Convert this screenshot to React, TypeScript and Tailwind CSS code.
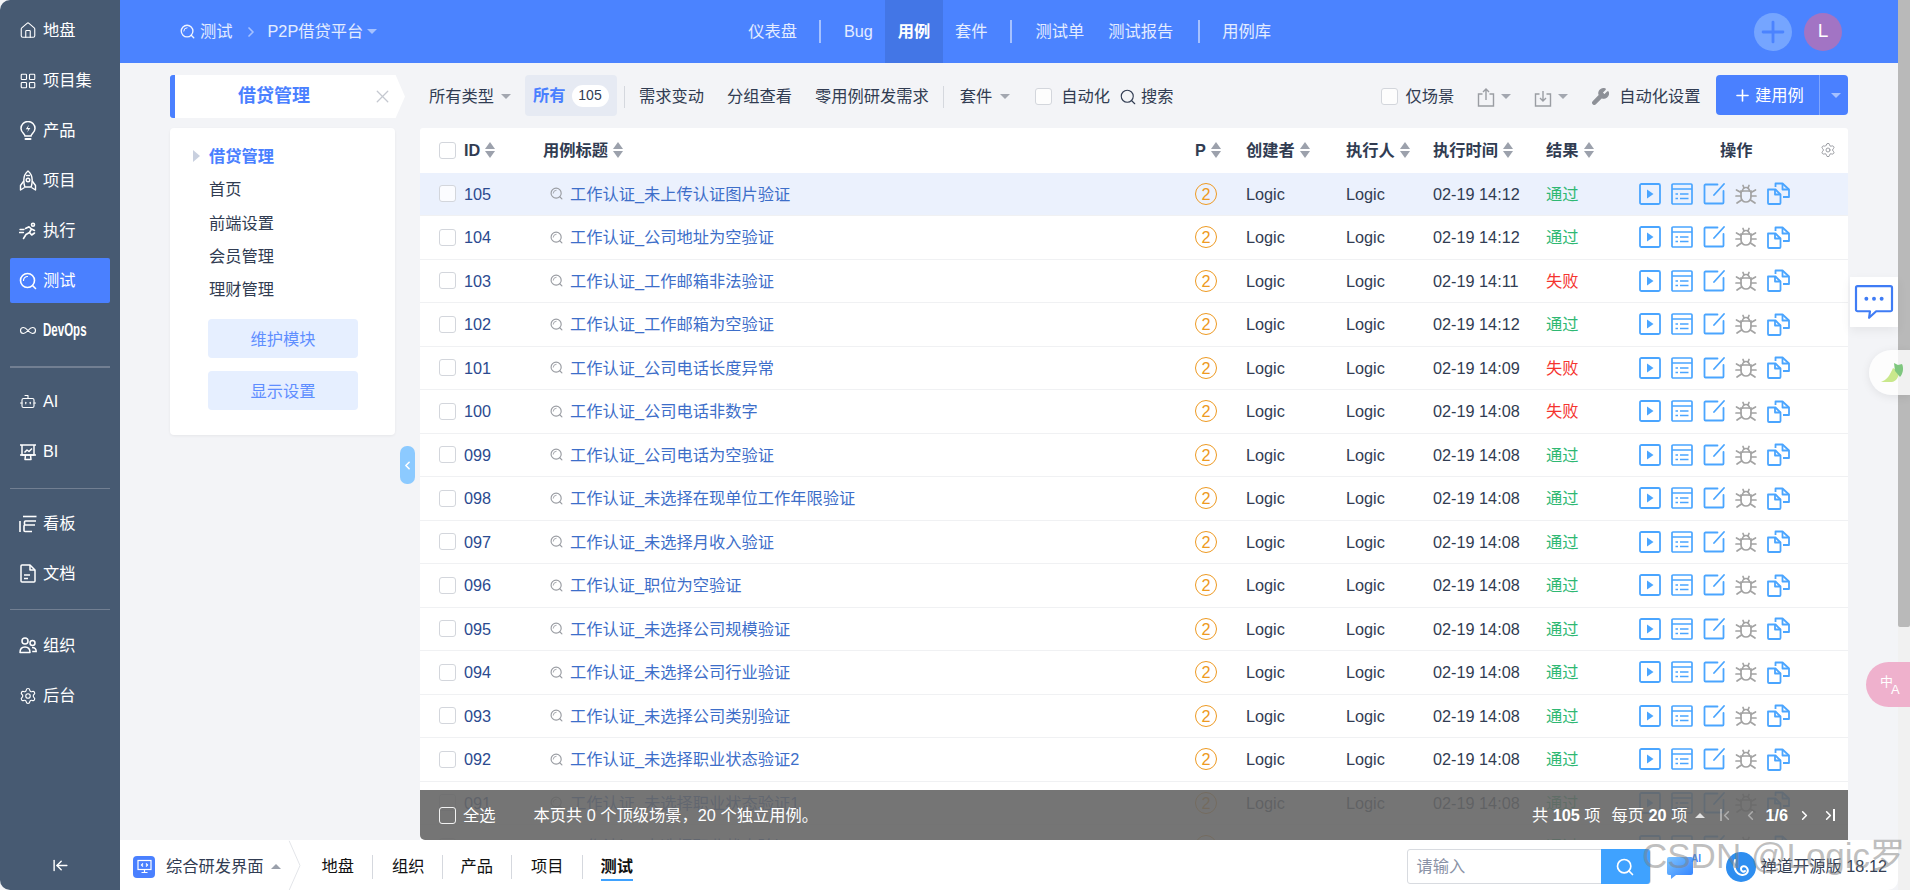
import { ArrowLeftToLine, Bot, ChevronLeft, ChevronRight, House, Infinity as InfinityIcon, LayoutGrid, Plus, Search, Settings, Wrench, X } from "lucide-react";

type Case = { id: string; title: string; time: string; result: string };

const cases: Case[] = [
  { id: "105", title: "工作认证_未上传认证图片验证", time: "02-19 14:12", result: "通过" },
  { id: "104", title: "工作认证_公司地址为空验证", time: "02-19 14:12", result: "通过" },
  { id: "103", title: "工作认证_工作邮箱非法验证", time: "02-19 14:11", result: "失败" },
  { id: "102", title: "工作认证_工作邮箱为空验证", time: "02-19 14:12", result: "通过" },
  { id: "101", title: "工作认证_公司电话长度异常", time: "02-19 14:09", result: "失败" },
  { id: "100", title: "工作认证_公司电话非数字", time: "02-19 14:08", result: "失败" },
  { id: "099", title: "工作认证_公司电话为空验证", time: "02-19 14:08", result: "通过" },
  { id: "098", title: "工作认证_未选择在现单位工作年限验证", time: "02-19 14:08", result: "通过" },
  { id: "097", title: "工作认证_未选择月收入验证", time: "02-19 14:08", result: "通过" },
  { id: "096", title: "工作认证_职位为空验证", time: "02-19 14:08", result: "通过" },
  { id: "095", title: "工作认证_未选择公司规模验证", time: "02-19 14:08", result: "通过" },
  { id: "094", title: "工作认证_未选择公司行业验证", time: "02-19 14:08", result: "通过" },
  { id: "093", title: "工作认证_未选择公司类别验证", time: "02-19 14:08", result: "通过" },
  { id: "092", title: "工作认证_未选择职业状态验证2", time: "02-19 14:08", result: "通过" },
  { id: "091", title: "工作认证_未选择职业状态验证1", time: "02-19 14:08", result: "通过" },
  { id: "090", title: "工作认证_未选择职业状态验证", time: "02-19 14:08", result: "通过" },
];

function QIcon({ size = 18, className = "" }: { size?: number; className?: string }) {
  return (
    <svg width={size} height={size} viewBox="0 0 18 18" fill="none" stroke="currentColor" strokeWidth="1.6" strokeLinecap="round" className={className}>
      <circle cx="8.5" cy="8.5" r="7" />
      <path d="M13.5 13.5 16.5 16.5" />
      <path d="M8.5 4.5a4 4 0 0 0-4 4" strokeWidth="1.2" />
    </svg>
  );
}

function BulbIcon() {
  return (
    <svg width="18" height="20" viewBox="0 0 18 20" fill="none" stroke="currentColor" strokeWidth="1.5" strokeLinecap="round">
      <path d="M6 15c0-2-4-3.5-4-7.5a7 7 0 0 1 14 0c0 4-4 5.500-4 7.500z" />
      <path d="M6.500 18h5" strokeWidth="2" />
      <path d="M10 3.800 6.800 8.200h2.600L8 11.500l3.400-4.500H8.800z" fill="currentColor" stroke="none" />
    </svg>
  );
}

function RocketIcon() {
  return (
    <svg width="18" height="22" viewBox="0 0 18 22" fill="none" stroke="currentColor" strokeWidth="1.4" strokeLinejoin="round">
      <path d="M9 1c3 2.500 4.200 6 4.200 9 0 2.500-.4 5-1 7H5.800c-.6-2-1-4.500-1-7C4.800 7 6 3.500 9 1z" />
      <circle cx="9" cy="10" r="1.800" />
      <path d="M4.800 11 1.500 15.500V20l4-2.500M13.200 11l3.300 4.500V20l-4-2.500" />
      <path d="M7 5.500h4" />
    </svg>
  );
}

function RunnerIcon() {
  return (
    <svg width="18" height="18" viewBox="0 0 18 18" fill="none" stroke="currentColor" strokeWidth="1.6" strokeLinecap="round" strokeLinejoin="round">
      <circle cx="14" cy="2.800" r="1.500" />
      <path d="M6.500 6.500 10 4.800l2.500 2.200-2 3.500 2.200 2.500 2.800-2M12.500 7l3 1.500M10.500 10.500 7 12.500l-2.500 4" />
      <path d="M1 7.500h4M0.500 10.500h4" strokeWidth="1.300" />
    </svg>
  );
}

function BoardIcon() {
  return (
    <svg width="18" height="18" viewBox="0 0 18 18" fill="none" stroke="currentColor" strokeWidth="1.5" strokeLinejoin="round">
      <path d="M1 2h16M3 2v10h12V2" />
      <path d="m5.500 9.500 2.500-2.500 2 1.500 3-3" />
      <path d="M1 12h16M6.500 12l-.5 4.500h6L11.500 12" />
    </svg>
  );
}

function KanbanIcon() {
  return (
    <svg width="18" height="18" viewBox="0 0 18 18" fill="none" stroke="currentColor" strokeWidth="1.6">
      <path d="M4 1.500h13.500" />
      <path d="M1 6v11" />
      <path d="M17 6H6.500a1 1 0 0 0-1 1v2a1 1 0 0 0 1 1H16M12 10H6a1 1 0 0 0-1 1v4.500a1 1 0 0 0 1 1h7" />
    </svg>
  );
}

function DocIcon() {
  return (
    <svg width="16" height="19" viewBox="0 0 16 19" fill="none" stroke="currentColor" strokeWidth="1.5" strokeLinejoin="round">
      <path d="M2 1h8l5 5v11a1 1 0 0 1-1 1H2a1 1 0 0 1-1-1V2a1 1 0 0 1 1-1z" />
      <path d="M10 1v5h5" />
      <path d="M4 11h6M4 14.500h4" />
    </svg>
  );
}

function TeamIcon() {
  return (
    <svg width="18" height="17" viewBox="0 0 18 17" fill="none" stroke="currentColor" strokeWidth="1.5">
      <circle cx="6" cy="4" r="3" />
      <circle cx="13.500" cy="6" r="2.500" />
      <path d="M1 15.500c0-3.500 2-5.500 5-5.500s5 2 5 5.500H1z" strokeLinejoin="round" />
      <path d="M13 10.500c2.500 0 4.200 1.500 4.200 4h-4" />
    </svg>
  );
}

function PlayAction() {
  return (
    <svg width="22" height="22" viewBox="0 0 22 22" fill="none">
      <rect x="1" y="1" width="20" height="20" rx="1.500" stroke="#4aa5ff" strokeWidth="1.8" />
      <path d="M8 6.500v9l6.500-4.500z" fill="#4aa5ff" />
    </svg>
  );
}

function ListAction() {
  return (
    <svg width="22" height="22" viewBox="0 0 22 22" fill="none" stroke="#4aa5ff" strokeWidth="1.7">
      <rect x="1" y="1" width="20" height="20" rx="1" />
      <path d="M1 6h20M4.500 11h2.500M9 11h8.500M4.500 15.500h2.500M9 15.500h8.500" />
    </svg>
  );
}

function EditAction() {
  return (
    <svg width="22" height="22" viewBox="0 0 22 22" fill="none" stroke="#4aa5ff" strokeWidth="1.8" strokeLinecap="round">
      <path d="M14.500 1.500H2.500a1 1 0 0 0-1 1v17a1 1 0 0 0 1 1h17a1 1 0 0 0 1-1V8" />
      <path d="M21 1 11 12" />
    </svg>
  );
}

function BugAction() {
  return (
    <svg width="22" height="22" viewBox="0 0 22 22" fill="none" stroke="#a3a3a3" strokeWidth="1.7" strokeLinecap="round">
      <path d="M6 8h10v6a5 5 0 0 1-10 0z" />
      <path d="M7.500 8a3.500 3.500 0 0 1 7 0" />
      <path d="M8 2.500 9 4.800M14 2.500 13 4.800M1.500 7 6 9.500M20.500 7 16 9.500M1 13h5M21 13h-5M2 20l4.500-3M20 20l-4.500-3" />
    </svg>
  );
}

function CopyAction() {
  return (
    <svg width="24" height="23" viewBox="0 0 24 23" fill="none" stroke="#4aa5ff" strokeWidth="1.8" strokeLinejoin="round">
      <path d="M1 7.500h7.500l5 5v8.500a1 1 0 0 1-1 1H2a1 1 0 0 1-1-1z" />
      <path d="M8 7.500v5h5.500" />
      <path d="M8.500 5V1.500h7l6.500 6v7.500h-6" />
      <path d="M15.500 1.500v6h6.500" />
    </svg>
  );
}

function UploadIcon({ down = false }: { down?: boolean }) {
  return (
    <svg width="18" height="20" viewBox="0 0 18 20" fill="none" stroke="#9a9da3" strokeWidth="1.4">
      <path d="M5.500 7H1.500v12h15V7h-4" />
      {down ? <path d="M9 4v10M6 11l3 3 3-3" /> : <path d="M9 13V2M6 5l3-3 3 3" />}
    </svg>
  );
}

function Caret({ light = false, className = "" }: { light?: boolean; className?: string }) {
  return <span className={`inline-block w-0 h-0 border-x-[5px] border-x-transparent border-t-[5px] ${light ? "border-t-white/50" : "border-t-[#a3a7b0]"} ${className}`} />;
}

function SortMark() {
  return (
    <span className="inline-flex flex-col gap-[2px] ml-[5px]">
      <span className="w-0 h-0 border-x-[5.5px] border-x-transparent border-b-[7px] border-b-[#9ca1ac]" />
      <span className="w-0 h-0 border-x-[5.5px] border-x-transparent border-t-[7px] border-t-[#9ca1ac]" />
    </span>
  );
}

function CheckBox({ dark = false }: { dark?: boolean }) {
  return <span className={`inline-block w-[17px] h-[17px] rounded-[3px] border shrink-0 ${dark ? "border-white/90" : "border-[#d3d6dc] bg-white/80"}`} />;
}

function NavSep({ className = "" }: { className?: string }) {
  return <span className={`w-[2px] h-[23px] bg-white/50 ${className}`} />;
}

function SideItem({ icon, label, active = false }: { icon: React.ReactNode; label: React.ReactNode; active?: boolean }) {
  return (
    <div className={`flex items-center h-[45px] mx-[10px] pl-[9px] rounded-[2px] text-white ${active ? "bg-[#4a80ff]" : ""}`}>
      <span className="w-[18px] flex justify-center shrink-0">{icon}</span>
      <span className="ml-[6px]">{label}</span>
    </div>
  );
}

function Sidebar() {
  return (
    <aside className="w-[120px] shrink-0 bg-[#475a72] rounded-l-[10px] flex flex-col pt-[8px] gap-[5px] text-[16.25px]">
      <SideItem icon={<House size={19} strokeWidth={1.5} />} label="地盘" />
      <SideItem icon={<LayoutGrid size={18} strokeWidth={1.5} />} label="项目集" />
      <SideItem icon={<BulbIcon />} label="产品" />
      <SideItem icon={<RocketIcon />} label="项目" />
      <SideItem icon={<RunnerIcon />} label="执行" />
      <SideItem active icon={<QIcon />} label="测试" />
      <SideItem
        icon={<InfinityIcon size={19} strokeWidth={1.5} />}
        label={<span className="inline-block text-[18px] font-bold origin-left scale-x-[.64]">DevOps</span>}
      />
      <div className="mx-[10px] h-[2px] bg-[#727f92] mt-[8px] mb-[6px]" />
      <SideItem icon={<Bot size={19} strokeWidth={1.5} />} label="AI" />
      <SideItem icon={<BoardIcon />} label="BI" />
      <div className="mx-[10px] h-px bg-[#727f92] mt-[9px] mb-[7px]" />
      <SideItem icon={<KanbanIcon />} label="看板" />
      <SideItem icon={<DocIcon />} label="文档" />
      <div className="mx-[10px] h-px bg-[#727f92] mt-[8px] mb-[8px]" />
      <SideItem icon={<TeamIcon />} label="组织" />
      <SideItem icon={<Settings size={18} strokeWidth={1.5} />} label="后台" />
      <div className="mt-auto mb-[16px] flex justify-center text-white">
        <ArrowLeftToLine size={17} strokeWidth={2} />
      </div>
    </aside>
  );
}

function TopBar() {
  return (
    <header className="h-[63px] shrink-0 bg-[#4b83ff] flex items-center pl-[60px] pr-[56px] text-[16.25px] text-white/85">
      <QIcon size={15} className="text-white/90" />
      <span className="ml-[5px]">测试</span>
      <ChevronRight size={16} strokeWidth={2.5} className="ml-[10px] text-white/50" />
      <span className="ml-[9px]">P2P借贷平台</span>
      <Caret light className="ml-[4px]" />
      <span className="ml-[371px]">仪表盘</span>
      <NavSep className="ml-[22px]" />
      <span className="ml-[23px]">Bug</span>
      <span className="ml-[12px] w-[58px] h-full bg-[#4376e6] flex items-center justify-center font-bold text-white">用例</span>
      <span className="ml-[12px]">套件</span>
      <NavSep className="ml-[23px]" />
      <span className="ml-[23px]">测试单</span>
      <span className="ml-[24px]">测试报告</span>
      <NavSep className="ml-[25px]" />
      <span className="ml-[22px]">用例库</span>
      <span className="ml-auto w-[38px] h-[38px] rounded-full bg-[#75a5ff] flex items-center justify-center text-[#4b83ff]">
        <Plus size={34} strokeWidth={2} />
      </span>
      <span className="ml-[12px] w-[38px] h-[38px] rounded-full bg-[#a274c4] flex items-center justify-center text-white text-[19px]">L</span>
    </header>
  );
}

function ModuleSide() {
  return (
    <div className="w-[300px] shrink-0 pl-[50px]">
      <div className="relative w-[235px] h-[43px] bg-white flex items-center [clip-path:polygon(0_0,96%_0,100%_50%,96%_100%,0_100%)]">
        <span className="w-[5px] h-full bg-[#4a80ff] rounded-l-[3px]" />
        <span className="ml-[63px] text-[18px] font-bold text-[#4a80ff]">借贷管理</span>
        <X size={21} strokeWidth={1.5} className="ml-[62px] text-[#c5c8d0]" />
      </div>
      <div className="mt-[10px] w-[225px] h-[307px] bg-white rounded-[4px] shadow-[0_1px_3px_rgba(0,0,0,.06)] pt-[11.5px] text-[16.25px] text-[#313c52]">
        <div className="h-[33.3px] flex items-center pl-[23px] font-bold text-[#4a80ff]">
          <span className="w-0 h-0 border-y-[6px] border-y-transparent border-l-[7px] border-l-[#c9d0df] mr-[9px]" />
          借贷管理
        </div>
        <div className="h-[33.3px] flex items-center pl-[39px]">首页</div>
        <div className="h-[33.3px] flex items-center pl-[39px]">前端设置</div>
        <div className="h-[33.3px] flex items-center pl-[39px]">会员管理</div>
        <div className="h-[33.3px] flex items-center pl-[39px]">理财管理</div>
        <div className="ml-[38px] mt-[13.5px] w-[150px] h-[39px] rounded-[4px] bg-[#e6efff] text-[#5f8eff] flex items-center justify-center">维护模块</div>
        <div className="ml-[38px] mt-[13px] w-[150px] h-[39px] rounded-[4px] bg-[#e6efff] text-[#5f8eff] flex items-center justify-center">显示设置</div>
      </div>
    </div>
  );
}

function Toolbar() {
  return (
    <div className="h-[43px] mb-[10px] flex items-center text-[16.25px] text-[#313c52]">
      <span className="ml-[9px]">所有类型</span>
      <Caret className="ml-[7px]" />
      <div className="ml-[14px] w-[92px] h-[41px] -mt-[2px] rounded-[4px] bg-[#e6eaf3] flex items-center pl-[8px]">
        <span className="font-bold text-[#4a80ff]">所有</span>
        <span className="ml-[6px] w-[37px] h-[22px] rounded-full bg-white text-[14px] flex items-center justify-center">105</span>
      </div>
      <span className="ml-[7px] w-px h-[22px] bg-[#d5d8de]" />
      <span className="ml-[14px]">需求变动</span>
      <span className="ml-[23px]">分组查看</span>
      <span className="ml-[23px]">零用例研发需求</span>
      <span className="ml-[14px] w-px h-[22px] bg-[#d5d8de]" />
      <span className="ml-[16px]">套件</span>
      <Caret className="ml-[8px]" />
      <span className="ml-[25px] flex"><CheckBox /></span>
      <span className="ml-[9px]">自动化</span>
      <Search size={18} strokeWidth={1.5} className="ml-[9px]" />
      <span className="ml-[4px]">搜索</span>
      <span className="ml-[207px] flex"><CheckBox /></span>
      <span className="ml-[8px]">仅场景</span>
      <span className="ml-[23px] flex"><UploadIcon /></span>
      <Caret className="ml-[6px]" />
      <span className="ml-[23px] flex"><UploadIcon down /></span>
      <Caret className="ml-[6px]" />
      <Wrench size={19} strokeWidth={1.5} fill="currentColor" className="ml-[23px] text-[#8d9097]" />
      <span className="ml-[9px]">自动化设置</span>
      <div className="ml-auto w-[132px] h-[40px] -mt-[3px] rounded-[4px] bg-[#4a80ff] text-white flex items-center">
        <Plus size={19} strokeWidth={2} className="ml-[17px]" />
        <span className="ml-[3px]">建用例</span>
        <span className="ml-[15px] w-px h-full bg-white/30" />
        <Caret light className="ml-[11px]" />
      </div>
    </div>
  );
}

function HeaderRow() {
  return (
    <div className="h-[44.6px] flex items-center bg-white font-bold text-[#313c52]">
      <div className="w-[44px] pl-[19px] flex"><CheckBox /></div>
      <div className="w-[79px] flex items-center">ID<SortMark /></div>
      <div className="w-[652px] flex items-center">用例标题<SortMark /></div>
      <div className="w-[51px] flex items-center">P<SortMark /></div>
      <div className="w-[100px] flex items-center">创建者<SortMark /></div>
      <div className="w-[87px] flex items-center">执行人<SortMark /></div>
      <div className="w-[113px] flex items-center">执行时间<SortMark /></div>
      <div className="w-[93px] flex items-center">结果<SortMark /></div>
      <div className="flex-1 pl-[81px]">操作</div>
      <Settings size={16} strokeWidth={1.3} className="mr-[12px] text-[#8d9097]" />
    </div>
  );
}

function CaseRow({ item, first }: { item: Case; first: boolean }) {
  return (
    <div className={`h-[43.5px] flex items-center border-b border-[#f0f1f3] text-[#313c52] ${first ? "bg-[#ebf1fd]" : "bg-white"}`}>
      <div className="w-[44px] pl-[19px] flex"><CheckBox /></div>
      <div className="w-[79px] text-[#2b4a8f]">{item.id}</div>
      <div className="w-[652px] flex items-center pl-[7px] text-[#3d6ec9]">
        <QIcon size={13} className="text-[#9a9da3] mr-[7px]" />
        {item.title}
      </div>
      <div className="w-[51px]">
        <span className="w-[22px] h-[22px] rounded-full border border-[#ee9a22] text-[#ee9a22] flex items-center justify-center">2</span>
      </div>
      <div className="w-[100px]">Logic</div>
      <div className="w-[87px]">Logic</div>
      <div className="w-[113px]">{item.time}</div>
      <div className={`w-[93px] ${item.result === "通过" ? "text-[#2fb873]" : "text-[#f5342f]"}`}>{item.result}</div>
      <div className="flex items-center gap-[10px]">
        <PlayAction />
        <ListAction />
        <EditAction />
        <BugAction />
        <CopyAction />
      </div>
    </div>
  );
}

function CaseTable() {
  return (
    <div className="w-[1428px] shrink-0 flex flex-col min-h-0">
      <Toolbar />
      <div className="relative flex-1 overflow-hidden text-[16.25px] rounded-t-[3px]">
        <HeaderRow />
        {cases.map((item, i) => (
          <CaseRow key={item.id} item={item} first={i === 0} />
        ))}
        <div className="absolute left-0 right-0 bottom-0 h-[50px] bg-[#666]/90 rounded-bl-[5px] flex items-center text-white">
          <span className="ml-[19px] flex"><CheckBox dark /></span>
          <span className="ml-[7px]">全选</span>
          <span className="ml-[38px]">本页共 0 个顶级场景，20 个独立用例。</span>
          <span className="ml-auto">共 <b>105</b> 项</span>
          <span className="ml-[11px]">每页 <b>20</b> 项</span>
          <span className="ml-[8px] w-0 h-0 border-x-[5px] border-x-transparent border-b-[5px] border-b-white/80" />
          <span className="ml-[15px] flex items-center text-white/40">
            <span className="w-[2px] h-[12px] bg-white/40" />
            <ChevronLeft size={15} strokeWidth={2.5} className="-ml-[3px]" />
          </span>
          <ChevronLeft size={15} strokeWidth={2.5} className="ml-[9px] text-white/40" />
          <b className="ml-[7px]">1/6</b>
          <ChevronRight size={15} strokeWidth={2.5} className="ml-[9px]" />
          <span className="ml-[9px] mr-[13px] flex items-center">
            <ChevronRight size={15} strokeWidth={2.5} className="-mr-[3px]" />
            <span className="w-[2px] h-[12px] bg-white" />
          </span>
        </div>
      </div>
    </div>
  );
}

function BottomBar() {
  return (
    <footer className="relative h-[50px] shrink-0 bg-white rounded-br-[10px] pt-[3px] flex items-center text-[16.25px] text-[#313c52]">
      <span className="ml-[13px] w-[22px] h-[22px] rounded-[4px] bg-[#4a80ff] flex items-center justify-center">
        <svg width="15" height="15" viewBox="0 0 15 15" fill="none" stroke="#fff" strokeWidth="1.2">
          <rect x="1" y="1.500" width="13" height="9" />
          <path d="M7.500 10.500v3M4.500 13.500h6M6 4.500 4.500 6 6 7.500M9 4.500 10.500 6 9 7.500" />
        </svg>
      </span>
      <span className="ml-[11px]">综合研发界面</span>
      <span className="ml-[7px] w-0 h-0 border-x-[5px] border-x-transparent border-b-[5px] border-b-[#9aa0ab]" />
      <svg width="14" height="50" viewBox="0 0 14 50" fill="none" stroke="#e3e5e9" className="ml-[7px] -translate-y-[1.5px]">
        <path d="M1 0 12 25 1 50" />
      </svg>
      <span className="ml-[20px] text-[#111]">地盘</span>
      <span className="ml-[18px] w-px h-[24px] bg-[#d5d8de]" />
      <span className="ml-[19px] text-[#111]">组织</span>
      <span className="ml-[17px] w-px h-[24px] bg-[#d5d8de]" />
      <span className="ml-[18px] text-[#111]">产品</span>
      <span className="ml-[18px] w-px h-[24px] bg-[#d5d8de]" />
      <span className="ml-[19px] text-[#111]">项目</span>
      <span className="ml-[18px] w-px h-[24px] bg-[#d5d8de]" />
      <span className="ml-[18px] relative font-bold text-[#111]">
        测试
        <span className="absolute left-0 right-0 -bottom-[2px] h-[2px] bg-[#3fa2ff]" />
      </span>
      <div className="ml-auto flex items-center h-[35px] w-[244px] border border-[#d8dbe0] rounded-[3px] pl-[9px] text-[#8a92a6]">
        请输入
        <span className="ml-auto w-[49px] h-[35px] bg-[#3fa2ff] rounded-r-[3px] flex items-center justify-center text-white">
          <Search size={20} strokeWidth={2} />
        </span>
      </div>
      <svg width="36" height="28" viewBox="0 0 36 28" className="ml-[15px]">
        <defs>
          <linearGradient id="aiChat" x1="0" y1="0" x2="1" y2="1">
            <stop offset="0" stopColor="#7cc4ff" />
            <stop offset="1" stopColor="#2f80ff" />
          </linearGradient>
        </defs>
        <path d="M3 4h22a2 2 0 0 1 2 2v14a2 2 0 0 1-2 2H10l-5 4v-4H3a2 2 0 0 1-2-2V6a2 2 0 0 1 2-2z" fill="url(#aiChat)" />
        <text x="25" y="9" fontSize="10" fontWeight="700" fill="#3f8bff">AI</text>
      </svg>
      <svg width="30" height="30" viewBox="0 0 30 30" fill="none" className="ml-[24px]">
        <circle cx="15" cy="15" r="15" fill="#2e8ef0" />
        <path d="M9 8c-2 6 0 14 7 15 5 .5 7-4 5-7s-6-2-6 1 3 3 4 2" stroke="#fff" strokeWidth="2" strokeLinecap="round" />
      </svg>
      <span className="ml-[5px] mr-[11px] whitespace-nowrap">禅道开源版 18.12</span>
    </footer>
  );
}

function Floats() {
  return (
    <>
      <div className="absolute left-[1850px] top-[277px] w-[48px] h-[50px] bg-white shadow-[0_4px_10px_rgba(0,0,0,.06)] flex items-center justify-center">
        <svg width="40" height="36" viewBox="0 0 36 33" fill="none">
          <path d="M3 2h30a1.500 1.500 0 0 1 1.500 1.500v20a1.500 1.500 0 0 1-1.500 1.500H20l-6.500 6 .8-6H3a1.500 1.500 0 0 1-1.500-1.500v-20A1.500 1.500 0 0 1 3 2z" stroke="#3f7cf5" strokeWidth="2" strokeLinejoin="round" fill="#fff" />
          <circle cx="11" cy="13.500" r="1.800" fill="#3f7cf5" />
          <circle cx="18" cy="13.500" r="1.800" fill="#3f7cf5" />
          <circle cx="25" cy="13.500" r="1.800" fill="#3f7cf5" />
        </svg>
      </div>
      <div className="absolute left-[1869px] top-[350px] w-[41px] h-[45px] rounded-l-full bg-white/80 shadow-[0_2px_10px_rgba(0,0,0,.08)] flex items-center pl-[11px]">
        <svg width="24" height="24" viewBox="0 0 24 24">
          <path d="M1 21c6-2 9-7 12-14l5 3c2 4-1 10-6 11z" fill="#c9e88c" />
          <path d="M14 2l4 2 4-1c2 4 1 10-2 13l-5-6z" fill="#7fc77f" />
        </svg>
      </div>
      <div className="absolute left-[1866px] top-[662px] w-[44px] h-[45px] rounded-l-full bg-[#eeaac8]/90 flex items-center pl-[14px] text-white text-[13px] leading-none">
        <span className="-mt-[7px]">中</span>
        <span className="-ml-[2px] mt-[9px]">A</span>
      </div>
      <div className="absolute left-[1642px] top-[834px] text-[35px] leading-[44px] text-[#808080]/50 whitespace-nowrap pointer-events-none">
        CSDN @Logic罗
      </div>
    </>
  );
}

export default function App() {
  return (
    <div className="relative w-[1910px] h-[890px] overflow-hidden flex bg-[#f3f4f7] font-['Liberation_Sans','Noto_Sans_CJK_SC',sans-serif]">
      <Sidebar />
      <div className="flex-1 min-w-0 flex flex-col">
        <TopBar />
        <div className="relative flex-1 min-h-0 flex pt-[12px]">
          <ModuleSide />
          <CaseTable />
          <div className="absolute left-[280px] top-[383px] w-[15px] h-[38px] rounded-[7px] bg-[#8ccaff] flex items-center justify-center text-white">
            <ChevronLeft size={13} strokeWidth={3} />
          </div>
        </div>
        <BottomBar />
      </div>
      <div className="w-[12px] shrink-0 bg-[#f1f1f1] flex flex-col">
        <div className="h-[627px] bg-[#b9b9b9] rounded-b-[2px]" />
      </div>
      <Floats />
    </div>
  );
}
